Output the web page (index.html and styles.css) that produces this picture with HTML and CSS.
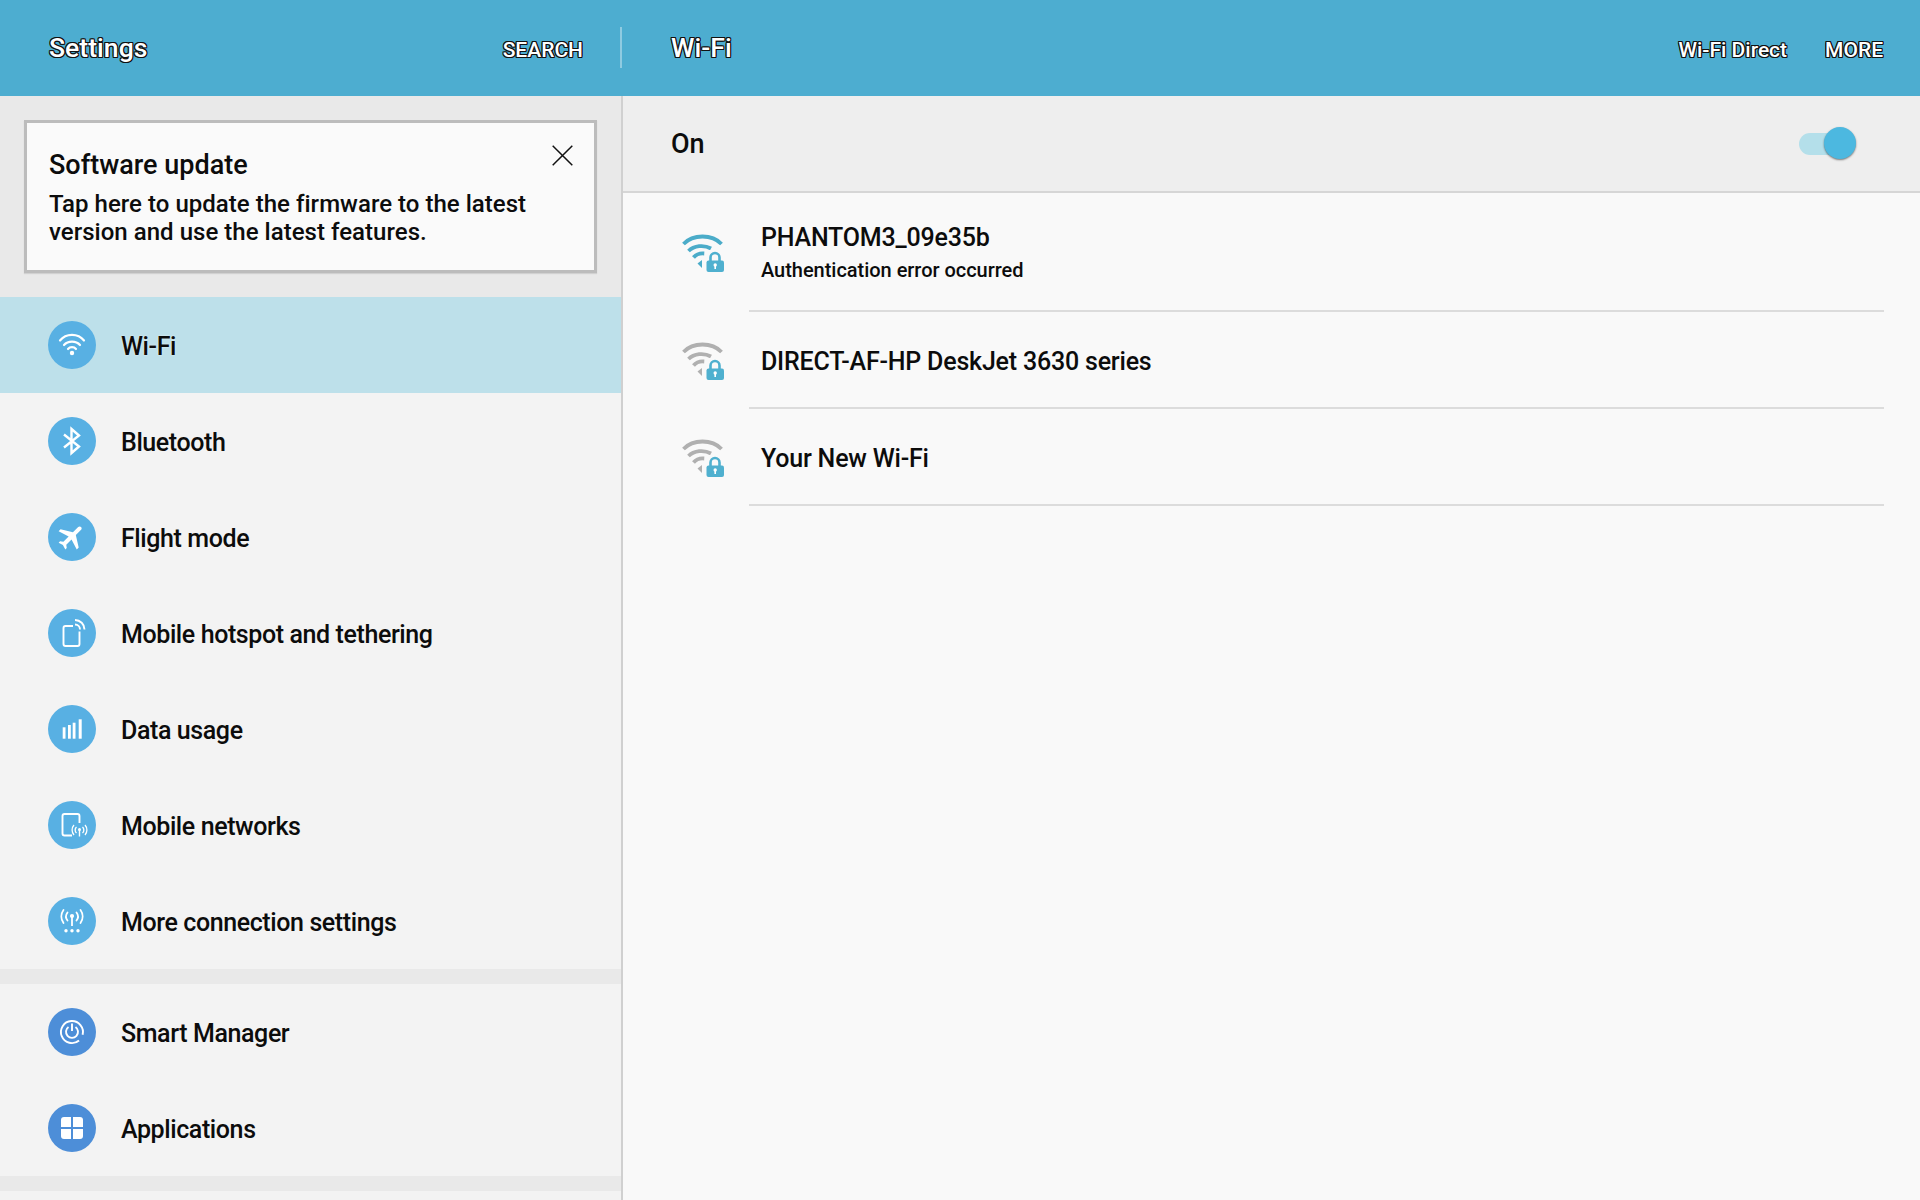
FILE: index.html
```html
<!DOCTYPE html>
<html lang="en">
<head>
<meta charset="utf-8">
<title>Settings - Wi-Fi</title>
<link rel="stylesheet" href="styles.css">
</head>
<body>
<svg class="defs" width="0" height="0" aria-hidden="true">
  <symbol id="wifi-lock" viewBox="0 0 42 38">
    <g fill="none" stroke="currentColor" stroke-width="3.8" stroke-linecap="butt">
      <path d="M1.500 10C11 0 30 0 39.500 10"/>
      <path d="M6.500 17C12 11.500 22 10.500 29 14.500"/>
      <path d="M11.500 23.500C14.500 20 18.500 19 22.500 19.500"/>
    </g>
    <path d="M15.500 29.500L20 26V34Z" fill="currentColor"/>
    <rect x="22.500" y="16" width="20" height="22" fill="#f9f9f9"/>
    <path d="M28.500 27V23.500a4.500 4.500 0 0 1 9 0V27" fill="none" stroke="#4fb0cf" stroke-width="2.600"/>
    <rect x="24.500" y="26.500" width="17.500" height="11.500" rx="2" fill="#4fb0cf"/>
    <circle cx="33.200" cy="31" r="1.700" fill="#fff"/>
    <rect x="32.400" y="31" width="1.600" height="4" fill="#fff"/>
  </symbol>
</svg>

<header class="topbar">
  <div class="topbar-left">
    <h1 class="bar-title">Settings</h1>
    <span class="bar-action">SEARCH</span>
  </div>
  <div class="bar-divider"></div>
  <div class="topbar-right">
    <h2 class="bar-title">Wi-Fi</h2>
    <div class="bar-actions">
      <span class="bar-action">Wi-Fi Direct</span>
      <span class="bar-action">MORE</span>
    </div>
  </div>
</header>

<main class="panes">
  <nav class="side">
    <div class="notice-wrap">
      <section class="notice">
        <div class="notice-text">
          <h3 class="notice-title">Software update</h3>
          <p class="notice-body">Tap here to update the firmware to the latest version and use the latest features.</p>
        </div>
        <svg class="notice-close" viewBox="0 0 21 21"><path d="M.7.7L20.300 20.300M20.300.7L.7 20.300" stroke="#111" stroke-width="1.500" fill="none"/></svg>
      </section>
    </div>

    <ul class="menu">
      <li class="menu-item selected">
        <svg class="menu-icon" viewBox="0 0 48 48"><circle cx="24" cy="24" r="24" fill="#58b0e3"/><g fill="none" stroke="#fff" stroke-width="2.200" stroke-linecap="round"><path d="M12 19.500C18 12 30 12 36 19.500"/><path d="M16 24C20 19.500 28 19.500 32 24"/><path d="M20 28C22 25.500 26 25.500 28 28"/></g><circle cx="24" cy="32" r="2.200" fill="#fff"/></svg>
        <span>Wi-Fi</span>
      </li>
      <li class="menu-item">
        <svg class="menu-icon" viewBox="0 0 48 48"><circle cx="24" cy="24" r="24" fill="#58b0e3"/><path d="M16 17.500L31 29.500L23.500 36V12L31 18.500L16 30.500" fill="none" stroke="#fff" stroke-width="2.400"/></svg>
        <span>Bluetooth</span>
      </li>
      <li class="menu-item">
        <svg class="menu-icon" viewBox="0 0 48 48"><circle cx="24" cy="24" r="24" fill="#58b0e3"/><path transform="rotate(45 24 24) translate(7.800 7.800) scale(1.350)" d="M21 16v-2l-8-5V3.500c0-.83-.67-1.500-1.500-1.500S10 2.670 10 3.500V9l-8 5v2l8-2.500V19l-2 1.500V22l3.500-1 3.500 1v-1.500L13 19v-5.500l8 2.500z" fill="#fff"/></svg>
        <span>Flight mode</span>
      </li>
      <li class="menu-item">
        <svg class="menu-icon" viewBox="0 0 48 48"><circle cx="24" cy="24" r="24" fill="#58b0e3"/><g fill="none" stroke="#fff" stroke-width="1.900"><path d="M25 17H17.500a2 2 0 0 0-2 2V35a2 2 0 0 0 2 2H29.500a2 2 0 0 0 2-2V22.500"/><path d="M27 15.500a5 5 0 0 1 5 5"/><path d="M27 11a9.500 9.500 0 0 1 9.500 9.500"/></g></svg>
        <span>Mobile hotspot and tethering</span>
      </li>
      <li class="menu-item">
        <svg class="menu-icon" viewBox="0 0 48 48"><circle cx="24" cy="24" r="24" fill="#58b0e3"/><g fill="#fff"><rect x="14.700" y="22.300" width="2.800" height="11.400"/><rect x="20" y="20" width="2.800" height="13.700"/><rect x="24.700" y="17.700" width="2.800" height="16"/><rect x="30.700" y="14.300" width="3" height="19.400"/></g></svg>
        <span>Data usage</span>
      </li>
      <li class="menu-item">
        <svg class="menu-icon" viewBox="0 0 48 48"><circle cx="24" cy="24" r="24" fill="#58b0e3"/><path d="M24 34.500H16.500a2 2 0 0 1-2-2V15a2 2 0 0 1 2-2H29.500a2 2 0 0 1 2 2V22" fill="none" stroke="#fff" stroke-width="1.900"/><g fill="none" stroke="#fff" stroke-width="1.300"><path d="M28.500 26a4 4 0 0 0 0 6"/><path d="M34.500 26a4 4 0 0 1 0 6"/><path d="M26 24a7.500 7.500 0 0 0 0 10"/><path d="M37 24a7.500 7.500 0 0 1 0 10"/></g><circle cx="31.500" cy="28.500" r="1.500" fill="#fff"/><rect x="30.800" y="29" width="1.400" height="6.500" fill="#fff"/></svg>
        <span>Mobile networks</span>
      </li>
      <li class="menu-item">
        <svg class="menu-icon" viewBox="0 0 48 48"><circle cx="24" cy="24" r="24" fill="#58b0e3"/><g fill="none" stroke="#fff" stroke-width="1.800" stroke-linecap="round"><path d="M19.500 15.500a6.500 6.500 0 0 0 0 8"/><path d="M28.500 15.500a6.500 6.500 0 0 1 0 8"/><path d="M15.500 13a11 11 0 0 0 0 13"/><path d="M32.500 13a11 11 0 0 1 0 13"/></g><circle cx="24" cy="19" r="2.100" fill="#fff"/><rect x="23.100" y="19" width="1.800" height="10" fill="#fff"/><g fill="#fff"><circle cx="18" cy="33.700" r="1.700"/><circle cx="24" cy="33.700" r="1.700"/><circle cx="30" cy="33.700" r="1.700"/></g></svg>
        <span>More connection settings</span>
      </li>
    </ul>
    <div class="menu-gap"></div>
    <ul class="menu">
      <li class="menu-item">
        <svg class="menu-icon" viewBox="0 0 48 48"><circle cx="24" cy="24" r="24" fill="#4d8ed8"/><g fill="none" stroke="#fff" stroke-width="1.900"><path d="M31.070 32.430A11 11 0 1 1 34.600 26.800"/><path d="M20.500 19A6 6 0 1 0 27.500 19"/><path d="M24 15.500V23"/></g></svg>
        <span>Smart Manager</span>
      </li>
      <li class="menu-item">
        <svg class="menu-icon" viewBox="0 0 48 48"><circle cx="24" cy="24" r="24" fill="#4d8ed8"/><g fill="#fff"><path d="M13 23V16a3 3 0 0 1 3-3H23V23Z"/><path d="M25 13H32a3 3 0 0 1 3 3V23H25Z"/><path d="M13 25H23V35H16a3 3 0 0 1-3-3Z"/><path d="M25 25H35V32a3 3 0 0 1-3 3H25Z"/></g></svg>
        <span>Applications</span>
      </li>
    </ul>
    <div class="menu-gap"></div>
  </nav>

  <section class="detail">
    <div class="switch-bar">
      <span class="switch-label">On</span>
      <div class="switch">
        <div class="switch-track"></div>
        <div class="switch-thumb"></div>
      </div>
    </div>
    <ul class="networks">
      <li class="network network-first">
        <svg class="network-icon active"><use href="#wifi-lock"/></svg>
        <div class="network-text">
          <div class="network-name">PHANTOM3_09e35b</div>
          <div class="network-status">Authentication error occurred</div>
        </div>
      </li>
      <li class="network">
        <svg class="network-icon"><use href="#wifi-lock"/></svg>
        <div class="network-text">
          <div class="network-name">DIRECT-AF-HP DeskJet 3630 series</div>
        </div>
      </li>
      <li class="network">
        <svg class="network-icon"><use href="#wifi-lock"/></svg>
        <div class="network-text">
          <div class="network-name">Your New Wi-Fi</div>
        </div>
      </li>
    </ul>
  </section>
</main>
</body>
</html>
```

FILE: styles.css
```css
* { box-sizing: border-box; }
html, body { margin: 0; padding: 0; height: 100%; }
body {
  width: 1920px;
  height: 1200px;
  overflow: hidden;
  display: flex;
  flex-direction: column;
  font-family: Roboto, "Liberation Sans", sans-serif;
  color: #0c0c0c;
  background: #f9f9f9;
}
ul { list-style: none; margin: 0; padding: 0; }
h1, h2, h3, p { margin: 0; font-weight: 400; }
.defs { position: absolute; }

.topbar {
  flex: 0 0 96px;
  min-height: 0;
  display: flex;
  align-items: center;
  background: #4dadd0;
  color: #fff;
  text-shadow: 1px 0 0 #111, -1px 0 0 #111, 0 1px 0 #111, 0 -1px 0 #111, 1px 1px 0 #111, -1px -1px 0 #111, 1px -1px 0 #111, -1px 1px 0 #111;
}
.topbar-left {
  flex: 0 0 620px;
  display: flex;
  justify-content: space-between;
  align-items: center;
  padding: 0 37px 0 49px;
}
.bar-divider { flex: 0 0 2px; height: 41px; margin-bottom: 1px; background: #8fcbe1; }
.topbar-right {
  flex: 1;
  display: flex;
  justify-content: space-between;
  align-items: center;
  padding: 0 37px 0 49px;
}
.bar-title { font-size: 26.6px; font-weight: 500; margin-bottom: 2px; }
.bar-action { font-size: 21px; font-weight: 500; margin-top: 4px; }
.bar-actions { display: flex; gap: 38px; }

.panes { flex: 1; display: flex; min-height: 0; }
.side {
  flex: 0 0 623px;
  border-right: 2px solid #d0d0d0;
  background: #f3f3f3;
}
.notice-wrap { height: 201px; padding: 24px 24px 0; background: #e9e9e9; }
.notice {
  height: 153px;
  display: flex;
  justify-content: space-between;
  padding: 26px 21px 0 22px;
  background: #fafafa;
  border: 3px solid #bcbcbc;
  box-shadow: 0 1px 1px rgba(0,0,0,.1);
}
.notice-text { flex: 1; }
.notice-title { font-size: 27px; font-weight: 500; line-height: 32px; margin-bottom: 9px; }
.notice-body { font-size: 24px; font-weight: 500; line-height: 28px; width: 490px; letter-spacing: .03px; }
.notice-close { flex: 0 0 21px; width: 21px; height: 21px; margin-top: -4px; }

.menu-item {
  height: 96px;
  display: flex;
  align-items: center;
  gap: 25px;
  padding-left: 48px;
  font-size: 25px;
  font-weight: 500;
  letter-spacing: -0.4px;
}
.menu-item span { padding-top: 2px; }
.menu-item.selected { background: #bde0ea; text-shadow: 0 0 2px rgba(255,255,255,.8); }
.menu-icon { flex: 0 0 48px; width: 48px; height: 48px; }
.menu-gap { height: 15px; background: #e9e9e9; }

.detail { flex: 1; min-width: 0; display: flex; flex-direction: column; }
.switch-bar {
  flex: 0 0 97px;
  display: flex;
  justify-content: space-between;
  align-items: center;
  padding: 0 64px 0 48px;
  background: #eeeeee;
  border-bottom: 2px solid #d6d6d6;
}
.switch-label { font-size: 27px; font-weight: 500; }
.switch { position: relative; width: 57px; height: 32px; margin-bottom: 2px; }
.switch-track { position: absolute; left: 0; top: 6px; width: 50px; height: 22px; border-radius: 11px; background: #b4dfea; }
.switch-thumb { position: absolute; right: 0; top: 0; width: 32px; height: 32px; border-radius: 50%; background: #4cb8e0; box-shadow: 0 1px 2px rgba(0,0,0,.5); }

.networks { padding-right: 36px; }
.network { height: 97px; display: flex; align-items: center; padding-left: 59px; }
.network-first { height: 119px; }
.network-icon { flex: 0 0 42px; width: 42px; height: 38px; color: #b0b0b0; margin-right: 37px; }
.network-icon.active { color: #4bacc9; }
.network-text {
  flex: 1;
  align-self: stretch;
  display: flex;
  flex-direction: column;
  justify-content: center;
  margin-left: -12px;
  padding: 3px 0 0 12px;
  border-bottom: 2px solid #dcdcdc;
}
.network-first .network-text { padding-top: 2px; }
.network-name { font-size: 25px; font-weight: 500; letter-spacing: -0.2px; }
.network-status { font-size: 20px; font-weight: 500; margin-top: 6px; letter-spacing: -0.03px; }
```
